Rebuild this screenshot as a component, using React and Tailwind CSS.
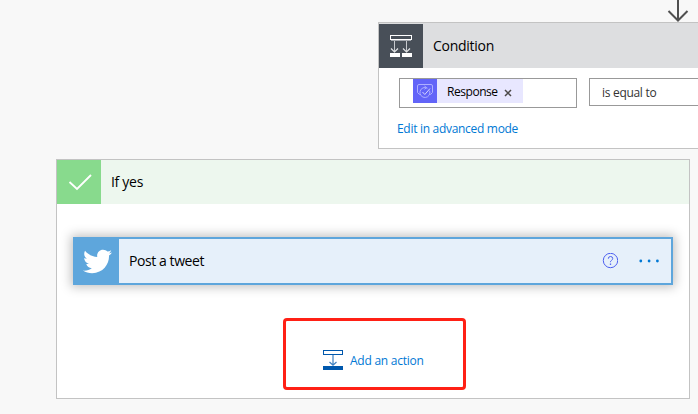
import { FaTwitter } from "react-icons/fa";

function ConditionIcon() {
  return (
    <svg className="block h-11 w-11" viewBox="0 0 44 44" fill="none">
      <rect x="11.5" y="11.5" width="21" height="4" stroke="#fff" />
      <path d="M12 16.5h20" stroke="#a4a8ae" />
      <path d="M15.5 17v11M27.5 17v11" stroke="#c6c9cd" />
      <path d="M12 24.500l3.500 3.500L19 24.500M24 24.500l3.500 3.500L31 24.500" stroke="#e1e3e5" strokeWidth="1.2" />
      <path d="M11 29h10v4H11zM23 29h10v4H23z" fill="#fff" />
    </svg>
  );
}

function FormsIcon() {
  return (
    <svg className="block h-6 w-6 shrink-0 bg-[#6264f8]" viewBox="0 0 24 24" fill="none" stroke="#aeb0ff" strokeWidth="1">
      <path d="M7.500 15.500H6.500l-2-2V7q0-1.500 1.500-1.500h12q1.500 0 1.500 1.500v6.500l-2 2h-1" />
      <path d="M14.500 9.200a5 5 0 1 0 2.100 2.500" />
      <path d="M9.500 13l2.300 2.500 5.200-6" stroke="#d5d5ff" />
      <path d="M11.500 7l2 1.700-2 1.500" />
    </svg>
  );
}

function AddActionIcon() {
  return (
    <svg className="block h-5 w-5 shrink-0" viewBox="0 0 20 20" fill="none" stroke="#0058ad">
      <rect x=".5" y=".5" width="19" height="4" />
      <path d="M10 5v10M6.500 12l3.500 3.200L13.500 12" stroke="#3c7fc0" strokeWidth="1.200" />
      <path d="M0 16h20v4H0z" fill="#0058ad" stroke="none" />
    </svg>
  );
}

function ConditionCard() {
  return (
    <section className="ml-[378px] h-[127px] w-[400px] border border-[#c3c3c3] bg-white">
      <header className="flex h-[45px] items-end bg-[#dddee0]">
        <div className="h-11 w-11 bg-[#484f58]"><ConditionIcon /></div>
        <h2 className="ml-[10px] text-[14px] leading-[44px] tracking-[-0.27px] text-black">Condition</h2>
      </header>
      <div className="flex items-start gap-3 pt-[10px] pl-5">
        <div className="h-[30px] w-[178px] shrink-0 border border-[#999] pl-[13px]">
          <div className="flex h-6 w-[110px] bg-[#e8e7ff]">
            <FormsIcon />
            <span className="ml-[10px] w-[57px] text-[12px] leading-[25px] tracking-[-0.45px] whitespace-nowrap text-black">Response</span>
            <svg className="mt-[10px] h-2 w-2" viewBox="0 0 8 8" stroke="#4b4948" strokeWidth="1.500"><path d="M1 1l6 6M7 1L1 7" /></svg>
          </div>
        </div>
        <div className="h-7 w-[160px] shrink-0 border border-[#999] pl-3 text-[12px] leading-[27px] tracking-[-0.3px] text-[#333]">is equal to</div>
      </div>
      <a className="mt-[11px] ml-[18px] block text-[12px] leading-5 tracking-[-0.3px] text-[#0078d4]">Edit in advanced mode</a>
    </section>
  );
}

function TweetAction() {
  return (
    <div className="mx-4 mt-[33px] flex h-12 w-[600px] items-center border-2 border-[#5ea6dc] bg-[#e6f0fa] shadow-[0_0_10px_2px_rgba(0,0,0,0.25)]">
      <div className="flex h-full w-11 items-center justify-center bg-[#5ea6dc]">
        <FaTwitter className="mt-px h-[29px] w-[29px] text-white" />
      </div>
      <span className="ml-[10px] flex-1 text-[14px] leading-[42px] tracking-[-0.42px] text-black">Post a tweet</span>
      <svg className="h-4 w-4" viewBox="0 0 16 16" fill="none" stroke="#4c5ff0">
        <circle cx="8.500" cy="7.500" r="7.200" />
        <path d="M6.300 5.700q0-2.200 2.200-2.200t2.200 2q0 1.200-1.200 1.900T8.500 9.200" />
        <path d="M8.500 10.500v1.400" strokeWidth="1.300" />
      </svg>
      <svg className="mr-[11px] ml-5 h-3 w-[22px]" viewBox="0 0 22 12" fill="#0078d4">
        <circle cx="2.800" cy="6" r="1.400" /><circle cx="11.100" cy="6" r="1.400" /><circle cx="19.400" cy="6" r="1.400" />
      </svg>
    </div>
  );
}

export default function App() {
  return (
    <main className="h-[414px] w-[698px] overflow-hidden bg-[#f8f8f8] font-['Open_Sans','Noto_Sans',sans-serif]">
      <svg className="ml-[667px] block h-[22px] w-[22px]" viewBox="0 0 22 22" fill="none" stroke="#505050" strokeWidth="2">
        <path d="M11 0v21M1.500 11l9.500 9.500L20.500 11" />
      </svg>
      <ConditionCard />
      <section className="mt-[10px] ml-14 h-[240px] w-[634px] border border-[#c3c3c3] bg-white">
        <header className="flex h-11 bg-[#edf7ee]">
          <svg className="block h-11 w-11 bg-[#88da8d]" viewBox="0 0 44 44" fill="none" stroke="#fff" strokeWidth="1.800">
            <path d="M12.500 22l7.500 7L34 15" />
          </svg>
          <h2 className="ml-[10px] text-[14px] leading-[44px] tracking-[-0.3px] text-black">If yes</h2>
        </header>
        <TweetAction />
        <div className="mt-[33px] ml-[226px] flex h-[72px] w-[183px] items-start rounded-[4px] border-3 border-[#ff2015] pt-[29px] pl-[37px]">
          <AddActionIcon />
          <a className="ml-[7px] text-[12px] leading-[22px] tracking-[-0.25px] text-[#0078d4]">Add an action</a>
        </div>
      </section>
    </main>
  );
}
